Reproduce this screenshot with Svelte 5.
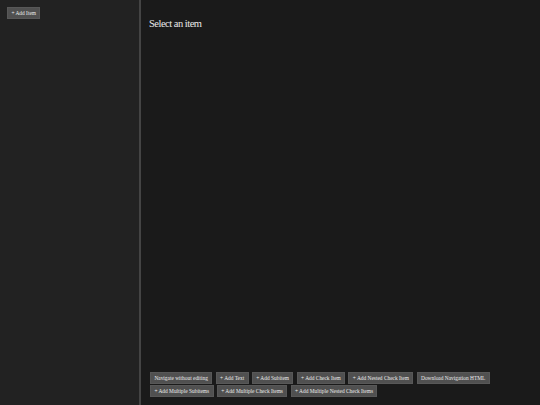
<script>
  const row = [
    'Navigate without editing', '+ Add Text', '+ Add Subitem', '+ Add Check Item',
    '+ Add Nested Check Item', 'Download Navigation HTML',
    '+ Add Multiple Subitems', '+ Add Multiple Check Items', '+ Add Multiple Nested Check Items'
  ];
</script>

<div class="app">
  <aside class="sidebar">
    <button class="btn">+ Add Item</button>
  </aside>
  <main class="main">
    <h2 class="title">Select an item</h2>
    <div class="actions">
      {#each row as label}
        <button class="btn">{label}</button>
      {/each}
    </div>
  </main>
</div>

<style>
  :global(body) {
    margin: 0;
    background: #1a1a1a;
  }
  .app {
    display: flex;
    height: 405px;
    width: 540px;
    overflow: hidden;
    font-family: "Liberation Serif", serif;
    color: #e0e0e0;
  }
  .sidebar {
    width: 139px;
    box-sizing: border-box;
    flex: none;
    padding: 7px;
    background: #222;
  }
  .main {
    flex: 1;
    display: flex;
    flex-direction: column;
    justify-content: space-between;
    border-left: 2px solid #444;
    padding: 7px 8px 8px 9px;
    min-width: 0;
  }
  .title {
    margin: 10px 0 0 -1px;
    font-size: 10.5px;
    line-height: 14px;
    font-weight: 400;
    letter-spacing: -0.5px;
    color: #e8e8e8;
  }
  .actions {
    display: flex;
    flex-wrap: wrap;
    gap: 1px 3.3px;
  }
  .btn {
    display: block;
    box-sizing: border-box;
    height: 12px;
    padding: 0 3.4px;
    border: 1px solid #585858;
    background: #505050;
    color: #ececec;
    font: 5.4px/10px "Liberation Serif", serif;
    white-space: nowrap;
  }
</style>
